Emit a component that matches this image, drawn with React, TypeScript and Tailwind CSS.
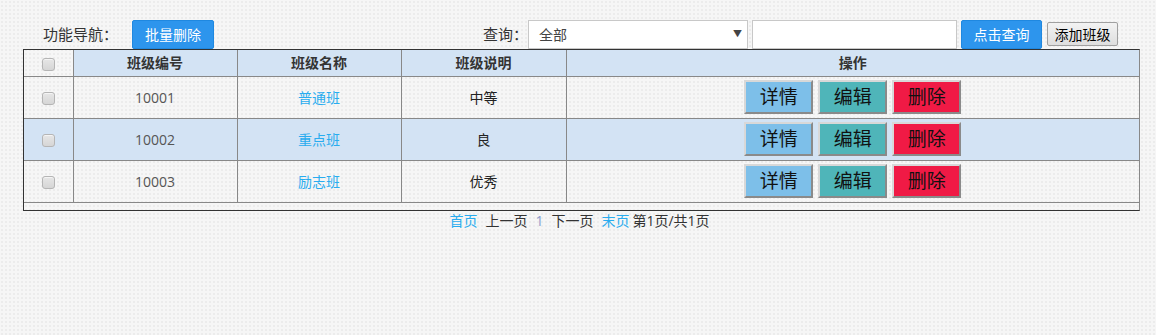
import React from "react";

const rows = [
  { id: "10001", name: "普通班", desc: "中等", alt: false },
  { id: "10002", name: "重点班", desc: "良", alt: true },
  { id: "10003", name: "励志班", desc: "优秀", alt: false },
];

function Box() {
  return (
    <span className="inline-block w-[13px] h-[13px] rounded-[3px] border border-[#b5b5b5] bg-[linear-gradient(#e6e6e6,#d6d6d6)] shadow-[inset_0_1px_0_#f4f4f4] align-middle" />
  );
}

function OpBtn({ label, bg }: { label: string; bg: string }) {
  return (
    <button
      className={`w-[69px] h-[34px] text-[19px] leading-none text-[#111] border-2 border-t-[#d8d8d8] border-l-[#d8d8d8] border-r-[#8a8a8a] border-b-[#8a8a8a] ${bg}`}
    >
      {label}
    </button>
  );
}

export default function App() {
  const font = { fontFamily: '"Open Sans", "Noto Sans CJK SC", sans-serif' };
  return (
    <div
      className="w-[1156px] h-[335px] bg-[#f6f6f6] bg-[radial-gradient(#ececec_1px,transparent_1px)] bg-[length:4px_4px] text-[#333]"
      style={font}
    >
      <div className="ml-[23px] w-[1117px] pt-[19px]">
        <div className="flex items-center h-[30px]">
          <span className="ml-[20px] text-[15px] text-[#333]">功能导航：</span>
          <button className="ml-[14px] w-[82px] h-[29px] rounded-[2px] bg-[#2d95ed] border border-[#1f88e0] text-white text-[14px]">
            批量删除
          </button>
          <span className="ml-auto text-[15px] text-[#333]">查询：</span>
          <div className="w-[220px] h-[29px] bg-white border border-[#c8c8c8] flex items-center pl-[10px] pr-[5px] text-[14px] text-[#444]">
            <span>全部</span>
            <span className="ml-auto text-[9px] text-[#444]">▼</span>
          </div>
          <div className="ml-[4px] w-[205px] h-[29px] bg-white border border-[#c8c8c8]" />
          <button className="ml-[4px] w-[81px] h-[29px] rounded-[2px] bg-[#2d95ed] border border-[#1f88e0] text-white text-[14px]">
            点击查询
          </button>
          <button className="ml-[5px] mr-[22px] w-[71px] h-[24px] rounded-[2px] bg-[linear-gradient(#f3f3f3,#dedede)] border border-[#a0a0a0] text-black text-[14px]">
            添加班级
          </button>
        </div>
        <div className="border-t border-l border-b border-[#333] border-r border-r-[#888] pb-[7px]">
          <table className="w-[1115px] border-collapse text-[14px] table-fixed">
            <colgroup>
              <col className="w-[49px]" />
              <col className="w-[164px]" />
              <col className="w-[164px]" />
              <col className="w-[165px]" />
              <col />
            </colgroup>
            <thead>
              <tr className="h-[26px]">
                <th className="border-r border-b border-[#888] font-normal">
                  <Box />
                </th>
                {["班级编号", "班级名称", "班级说明"].map((h) => (
                  <th
                    key={h}
                    className="bg-[#d3e3f4] border-r border-b border-[#888] font-bold text-[#333]"
                  >
                    {h}
                  </th>
                ))}
                <th className="bg-[#d3e3f4] border-b border-[#888] font-bold text-[#333]">操作</th>
              </tr>
            </thead>
            <tbody>
              {rows.map((r) => (
                <tr key={r.id} className={`h-[42px] ${r.alt ? "bg-[#d3e3f4]" : ""}`}>
                  <td className="border-r border-b border-[#888] text-center">
                    <Box />
                  </td>
                  <td className="border-r border-b border-[#888] text-center text-[#555]">{r.id}</td>
                  <td className="border-r border-b border-[#888] text-center text-[#29acef]">{r.name}</td>
                  <td className="border-r border-b border-[#888] text-center text-[#222]">{r.desc}</td>
                  <td className="border-b border-[#888]">
                    <div className="flex justify-center gap-[5px]">
                      <OpBtn label="详情" bg="bg-[#7dbfe9]" />
                      <OpBtn label="编辑" bg="bg-[#4fb5b9]" />
                      <OpBtn label="删除" bg="bg-[#f01a45]" />
                    </div>
                  </td>
                </tr>
              ))}
            </tbody>
          </table>
        </div>
        <div className="flex justify-center items-center h-[20px] text-[14px] text-[#333] gap-[8px] pr-[4px]">
          <span className="text-[#29acef]">首页</span>
          <span>上一页</span>
          <span className="text-[#8a9ccc]">1</span>
          <span>下一页</span>
          <span className="text-[#29acef] -mr-[5px]">末页</span>
          <span>第1页/共1页</span>
        </div>
      </div>
    </div>
  );
}
